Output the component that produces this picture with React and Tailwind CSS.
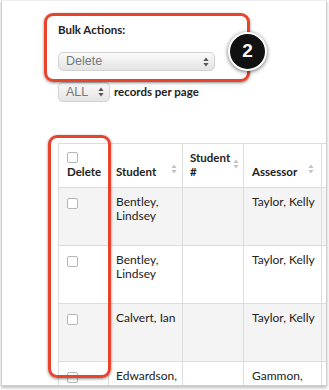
import React from 'react';

const rows = [
  { name: ['Bentley,', 'Lindsey'], assessor: ['Taylor, Kelly'] },
  { name: ['Bentley,', 'Lindsey'], assessor: ['Taylor, Kelly'] },
  { name: ['Calvert, Ian'], assessor: ['Taylor, Kelly'] },
  { name: ['Edwardson,'], assessor: ['Gammon,'] },
];

const SortArrows = () => (
  <svg width="6" height="10" viewBox="0 0 6 10" className="shrink-0">
    <path d="M3 0.5 L5.6 4 H0.4 Z" fill="#c4c4c4" />
    <path d="M3 9.5 L5.6 6 H0.4 Z" fill="#c4c4c4" />
  </svg>
);

const SelectArrows = () => (
  <svg width="6" height="10" viewBox="0 0 6 10">
    <path d="M3 0.5 L5.6 4 H0.4 Z" fill="#555" />
    <path d="M3 9.5 L5.6 6 H0.4 Z" fill="#555" />
  </svg>
);

const Checkbox = () => (
  <div className="w-[11px] h-[11px] rounded-[2px] border border-[#b5b5b5] bg-white" />
);

const Select = ({ label, className }) => (
  <div
    className={`flex items-center justify-between rounded-[5px] border border-[#d2d2d2] bg-gradient-to-b from-[#fafafa] to-[#e4e4e4] pl-[7px] pr-[5px] text-[12.5px] text-[#777] ${className}`}
    style={{ fontFamily: '"Liberation Sans", Arial, sans-serif' }}
  >
    <span>{label}</span>
    <SelectArrows />
  </div>
);

export default function App() {
  return (
    <div className="relative w-[329px] h-[390px] bg-white overflow-hidden" style={{ fontFamily: 'Lato, "Open Sans", sans-serif' }}>
      <div className="ml-[1px] w-[326px] h-[386px] border border-t-[#eee] border-[#cfcfcf] shadow-[0_2px_3px_rgba(0,0,0,0.25)] overflow-hidden bg-white">
        <div className="pl-[56px] pt-[22px]">
          <div className="text-[11.5px] leading-[14px] font-bold text-[#222]">Bulk Actions:</div>
          <Select label="Delete" className="mt-[15px] w-[157px] h-[19px]" />
          <div className="mt-[11px] flex items-center gap-[4px]">
            <Select label="ALL" className="w-[52px] h-[20px]" />
            <span className="text-[11.5px] font-bold text-[#222]">records per page</span>
          </div>
        </div>

        <table className="mt-[41px] ml-[56px] border-collapse text-[#222] table-fixed w-[300px]">
          <colgroup>
            <col className="w-[50px]" />
            <col className="w-[74px]" />
            <col className="w-[61px]" />
            <col className="w-[78px]" />
            <col className="w-[37px]" />
          </colgroup>
          <thead>
            <tr className="h-[44px] bg-white">
              <th className="border border-[#dcdcdc] align-bottom text-left pl-[8px] pb-[8px] text-[11.5px] leading-[14px] font-bold">
                <div className="mb-[2px]"><Checkbox /></div>
                Delete
              </th>
              <th className="border border-[#dcdcdc] align-bottom text-left pl-[7px] pr-[5px] pb-[8px] text-[11.5px] leading-[14px] font-bold">
                <div className="flex items-end justify-between">
                  <span>Student</span>
                  <span className="mb-[5px]"><SortArrows /></span>
                </div>
              </th>
              <th className="border border-[#dcdcdc] align-bottom text-left pl-[7px] pr-[4px] pb-[8px] text-[11.5px] leading-[14px] font-bold">
                <div className="flex items-end justify-between">
                  <span>Student<br />#</span>
                  <span className="mb-[10px]"><SortArrows /></span>
                </div>
              </th>
              <th className="border border-[#dcdcdc] align-bottom text-left pl-[8px] pr-[7px] pb-[8px] text-[11.5px] leading-[14px] font-bold">
                <div className="flex items-end justify-between">
                  <span>Assessor</span>
                  <span className="mb-[5px]"><SortArrows /></span>
                </div>
              </th>
              <th className="border-y border-[#dcdcdc]" />
            </tr>
          </thead>
          <tbody>
            {rows.map((r, i) => (
              <tr key={i} className={`h-[58px] ${i % 2 === 0 ? 'bg-[#f4f4f4]' : 'bg-white'}`}>
                <td className="border border-[#dcdcdc] align-top pl-[8px] pt-[10px]">
                  <Checkbox />
                </td>
                <td className="border border-[#dcdcdc] align-top pl-[7px] pt-[7px] text-[12px] leading-[14px]">
                  {r.name.map((n, j) => <div key={j}>{n}</div>)}
                </td>
                <td className="border border-[#dcdcdc]" />
                <td className="border border-[#dcdcdc] align-top pl-[8px] pt-[7px] text-[12px] leading-[14px] whitespace-nowrap">
                  {r.assessor.map((n, j) => <div key={j}>{n}</div>)}
                </td>
                <td className="border-y border-[#dcdcdc]" />
              </tr>
            ))}
          </tbody>
        </table>
      </div>

      {/* annotation highlights */}
      <div className="absolute left-[44px] top-[13px] w-[206px] h-[69px] rounded-[9px] border-[3.5px] border-[#e8432b] shadow-[0_1px_3px_rgba(0,0,0,0.45)]" />
      <div className="absolute left-[48px] top-[135px] w-[63px] h-[243px] rounded-[9px] border-[3.5px] border-[#e8432b] shadow-[0_1px_3px_rgba(0,0,0,0.45)]" />
      <div className="absolute left-[228px] top-[32px] w-[39px] h-[39px] rounded-full bg-[#111] border-[2px] border-white shadow-[0_1px_4px_rgba(0,0,0,0.6)] flex items-center justify-center text-white text-[19px] font-bold" style={{ fontFamily: '"Liberation Sans", Arial, sans-serif' }}>
        2
      </div>
    </div>
  );
}
